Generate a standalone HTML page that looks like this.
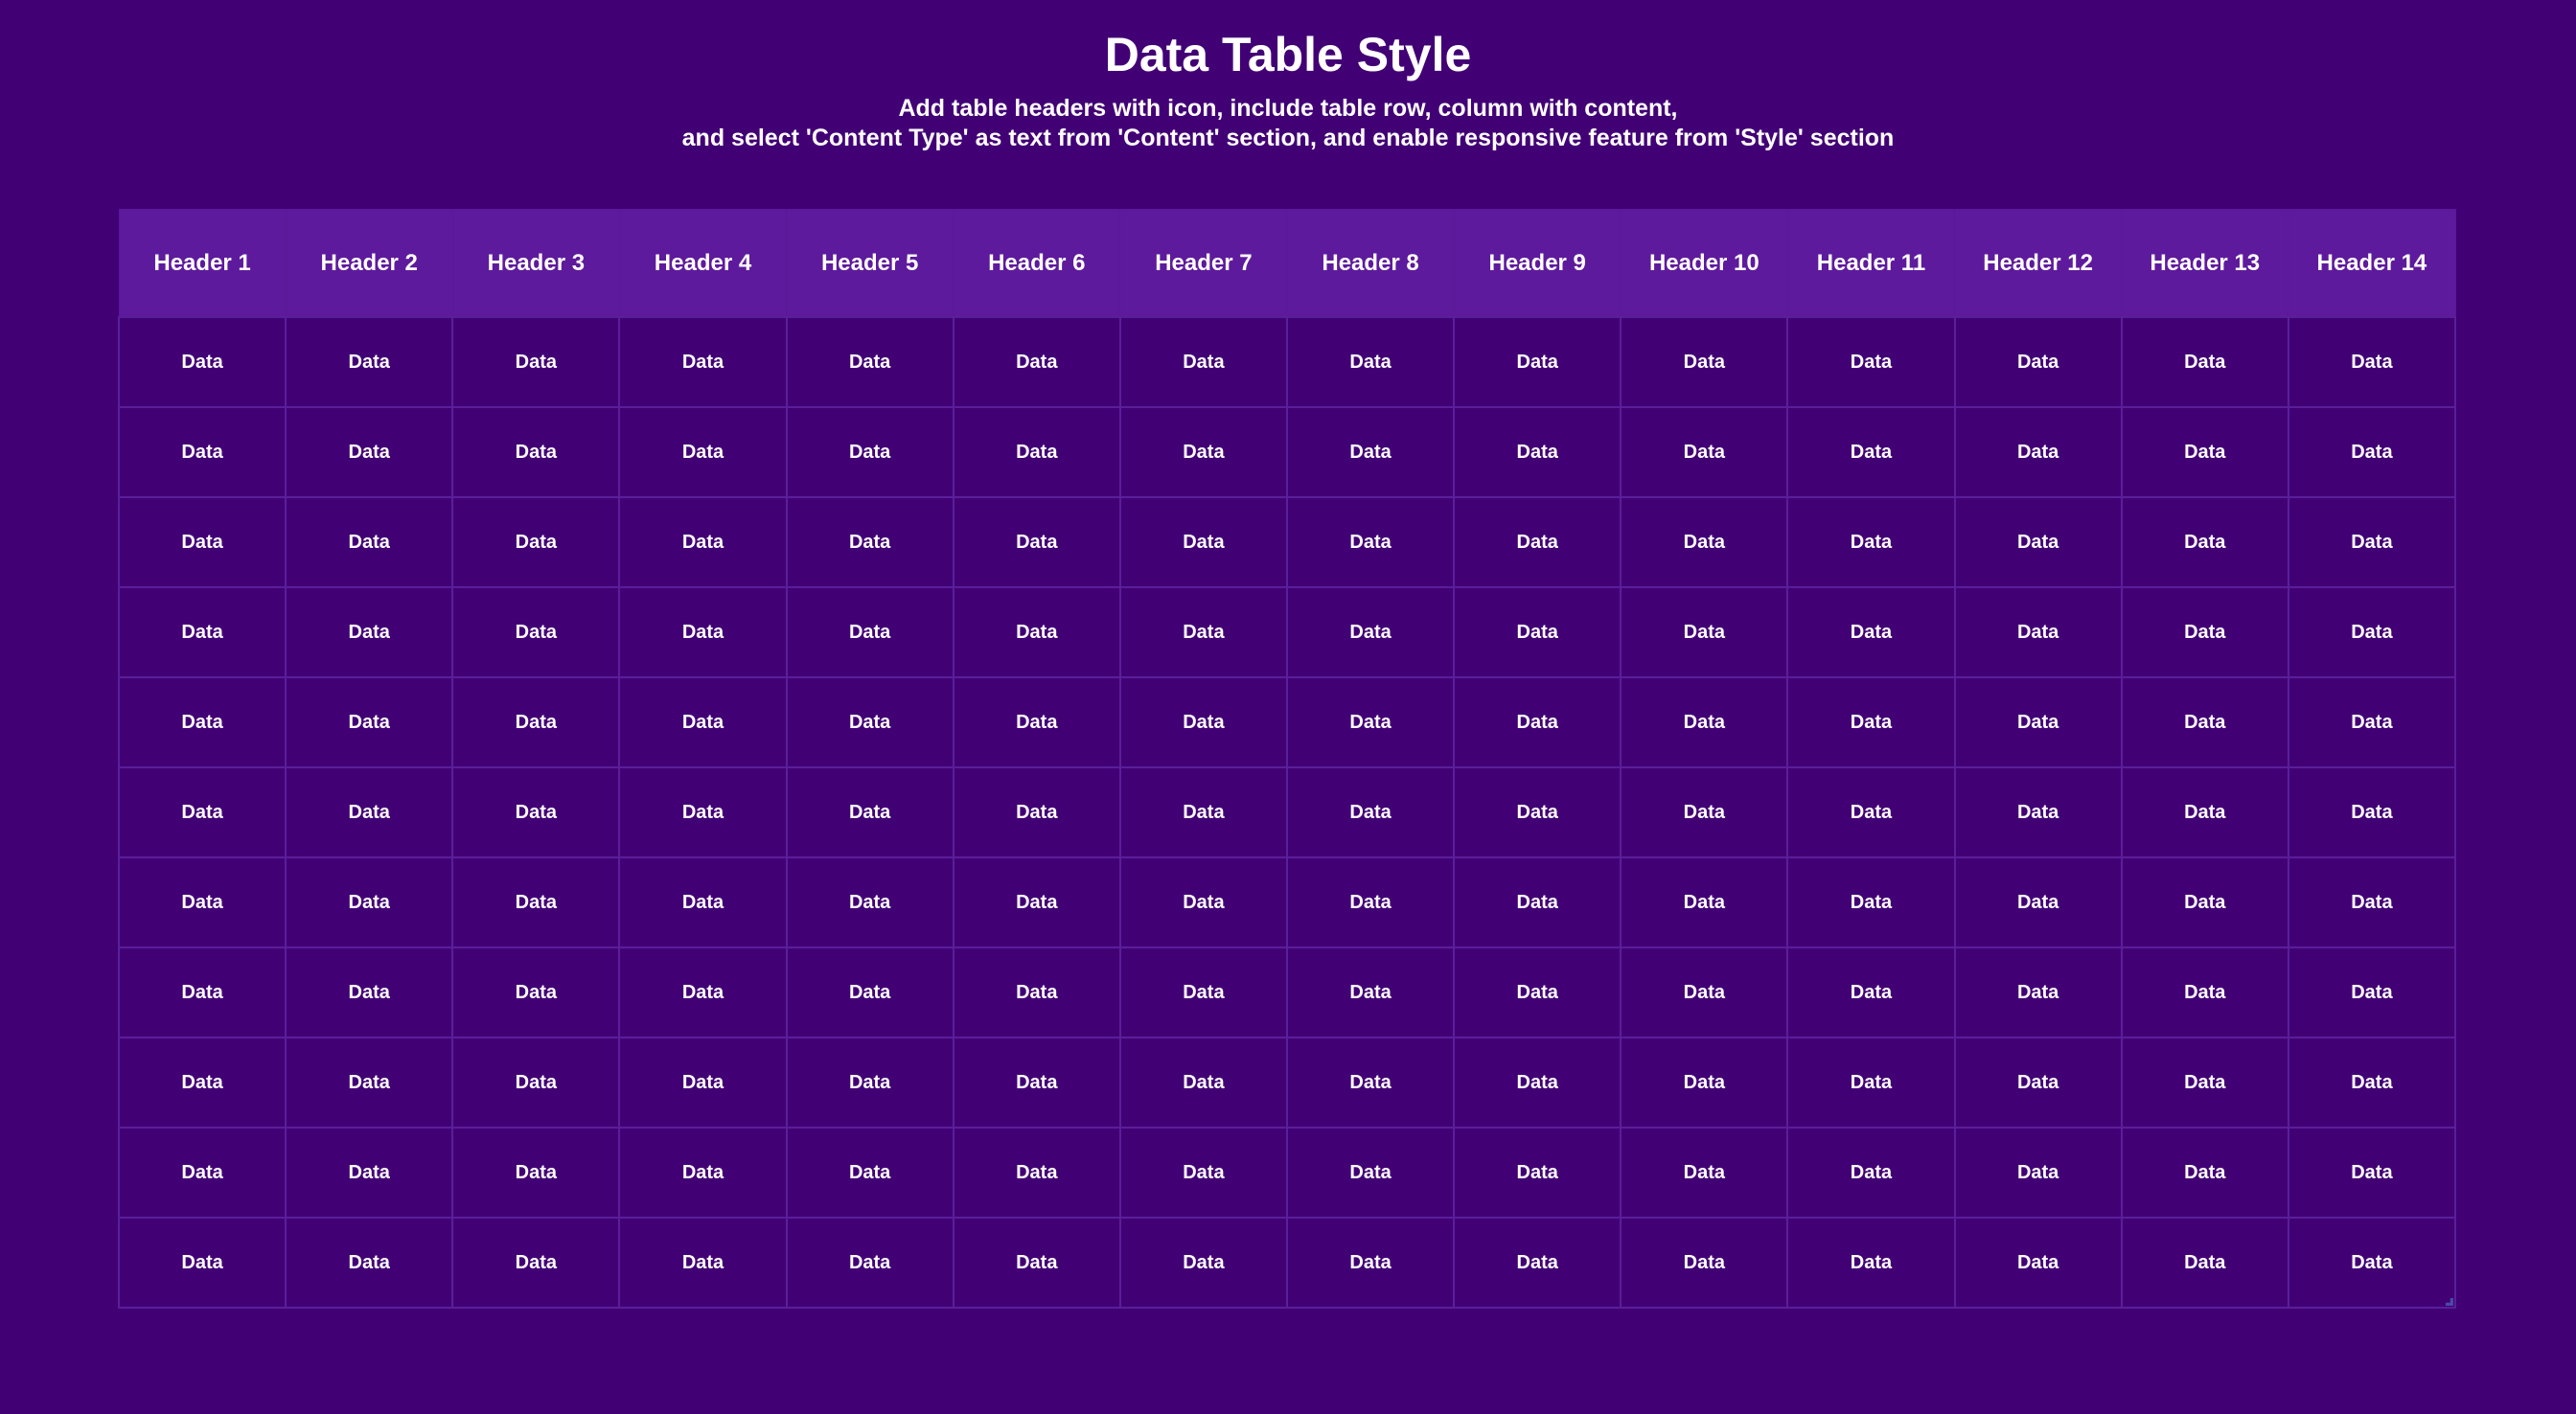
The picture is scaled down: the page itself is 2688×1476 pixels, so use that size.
<!DOCTYPE html>
<html><head><meta charset="utf-8"><style>
html,body{margin:0;padding:0;background:#420075;width:2688px;height:1476px;overflow:hidden;font-family:"Liberation Sans",sans-serif;color:#fff}
h1{position:absolute;left:0;width:2688px;top:24px;margin:0;text-align:center;font-size:50px;font-weight:bold;line-height:66px}
.sub{position:absolute;left:0;width:2688px;top:98px;text-align:center;font-size:25px;font-weight:bold;line-height:31px}
table{position:absolute;left:123px;top:218px;width:2440px;border-collapse:collapse;table-layout:fixed}
th{background:#5e1a9c;height:111px;font-size:24px;font-weight:bold;border:1px solid #5a1896;padding:0;text-align:center}
td{height:92px;border:2px solid #5a1f9a;font-size:20px;font-weight:bold;text-align:center;padding:0}
</style></head><body>
<h1>Data Table Style</h1>
<div class="sub">Add table headers with icon, include table row, column with content,<br>and select 'Content Type' as text from 'Content' section, and enable responsive feature from 'Style' section</div>
<table>
<tr><th>Header 1</th><th>Header 2</th><th>Header 3</th><th>Header 4</th><th>Header 5</th><th>Header 6</th><th>Header 7</th><th>Header 8</th><th>Header 9</th><th>Header 10</th><th>Header 11</th><th>Header 12</th><th>Header 13</th><th>Header 14</th></tr>
<tr><td>Data</td><td>Data</td><td>Data</td><td>Data</td><td>Data</td><td>Data</td><td>Data</td><td>Data</td><td>Data</td><td>Data</td><td>Data</td><td>Data</td><td>Data</td><td>Data</td></tr>
<tr><td>Data</td><td>Data</td><td>Data</td><td>Data</td><td>Data</td><td>Data</td><td>Data</td><td>Data</td><td>Data</td><td>Data</td><td>Data</td><td>Data</td><td>Data</td><td>Data</td></tr>
<tr><td>Data</td><td>Data</td><td>Data</td><td>Data</td><td>Data</td><td>Data</td><td>Data</td><td>Data</td><td>Data</td><td>Data</td><td>Data</td><td>Data</td><td>Data</td><td>Data</td></tr>
<tr><td>Data</td><td>Data</td><td>Data</td><td>Data</td><td>Data</td><td>Data</td><td>Data</td><td>Data</td><td>Data</td><td>Data</td><td>Data</td><td>Data</td><td>Data</td><td>Data</td></tr>
<tr><td>Data</td><td>Data</td><td>Data</td><td>Data</td><td>Data</td><td>Data</td><td>Data</td><td>Data</td><td>Data</td><td>Data</td><td>Data</td><td>Data</td><td>Data</td><td>Data</td></tr>
<tr><td>Data</td><td>Data</td><td>Data</td><td>Data</td><td>Data</td><td>Data</td><td>Data</td><td>Data</td><td>Data</td><td>Data</td><td>Data</td><td>Data</td><td>Data</td><td>Data</td></tr>
<tr><td>Data</td><td>Data</td><td>Data</td><td>Data</td><td>Data</td><td>Data</td><td>Data</td><td>Data</td><td>Data</td><td>Data</td><td>Data</td><td>Data</td><td>Data</td><td>Data</td></tr>
<tr><td>Data</td><td>Data</td><td>Data</td><td>Data</td><td>Data</td><td>Data</td><td>Data</td><td>Data</td><td>Data</td><td>Data</td><td>Data</td><td>Data</td><td>Data</td><td>Data</td></tr>
<tr><td>Data</td><td>Data</td><td>Data</td><td>Data</td><td>Data</td><td>Data</td><td>Data</td><td>Data</td><td>Data</td><td>Data</td><td>Data</td><td>Data</td><td>Data</td><td>Data</td></tr>
<tr><td>Data</td><td>Data</td><td>Data</td><td>Data</td><td>Data</td><td>Data</td><td>Data</td><td>Data</td><td>Data</td><td>Data</td><td>Data</td><td>Data</td><td>Data</td><td>Data</td></tr>
<tr><td>Data</td><td>Data</td><td>Data</td><td>Data</td><td>Data</td><td>Data</td><td>Data</td><td>Data</td><td>Data</td><td>Data</td><td>Data</td><td>Data</td><td>Data</td><td>Data</td></tr>
</table>
<div style="position:absolute;left:2552px;top:1355px;width:8px;height:8px;background:#4a4aa8;clip-path:polygon(100% 0,100% 100%,0 100%,0 60%,60% 60%,60% 0)"></div>
</body></html>
